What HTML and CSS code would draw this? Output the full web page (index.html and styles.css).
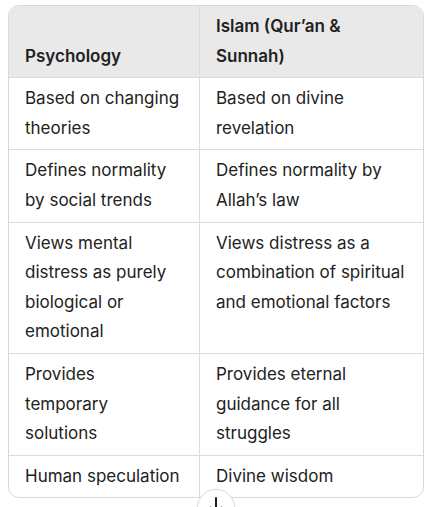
FILE: index.html
```html
<!DOCTYPE html>
<html lang="en">
<head>
<meta charset="utf-8">
<title>Psychology vs Islam</title>
<link rel="stylesheet" href="styles.css">
</head>
<body>
<div class="page">
  <div class="table-wrap">
    <table class="compare">
      <thead>
        <tr>
          <th class="col-a">Psychology</th>
          <th class="col-b">Islam (Qur’an &amp; Sunnah)</th>
        </tr>
      </thead>
      <tbody>
        <tr>
          <td>Based on changing theories</td>
          <td>Based on divine revelation</td>
        </tr>
        <tr>
          <td>Defines normality by social trends</td>
          <td>Defines normality by Allah’s law</td>
        </tr>
        <tr>
          <td>Views mental distress as purely biological or emotional</td>
          <td>Views distress as a combination of spiritual and emotional factors</td>
        </tr>
        <tr>
          <td>Provides temporary solutions</td>
          <td>Provides eternal guidance for all struggles</td>
        </tr>
        <tr>
          <td>Human speculation</td>
          <td>Divine wisdom</td>
        </tr>
      </tbody>
    </table>
  </div>
  <button class="scroll-down" aria-label="Scroll down">
    <svg width="16" height="20" viewBox="0 0 16 20" fill="none" stroke="#1d1d1f" stroke-width="2" stroke-linecap="round" stroke-linejoin="round">
      <path d="M8 2 V17"/>
      <path d="M2.5 11.5 L8 17 L13.5 11.5"/>
    </svg>
  </button>
</div>
</body>
</html>
```

FILE: styles.css
```css
html, body {
  margin: 0;
  padding: 0;
  background: #ffffff;
}

body {
  font-family: Inter, "Noto Sans", sans-serif;
  color: #222222;
  width: 433px;
  height: 507px;
  overflow: hidden;
}

.page {
  position: relative;
  height: 507px;
  padding: 5px 9px 0 8px;
  box-sizing: border-box;
}

.table-wrap {
  border: 1px solid #d8d8d8;
  border-radius: 11px;
  overflow: hidden;
}

.compare {
  width: 100%;
  border-collapse: separate;
  border-spacing: 0;
  table-layout: fixed;
  font-size: 17px;
  line-height: 29.6px;
}

.compare th,
.compare td {
  box-sizing: border-box;
  text-align: left;
  padding: 6px 16px 6px 16px;
  vertical-align: top;
  border-bottom: 1px solid #dcdcdc;
}

.compare .col-a {
  width: 191px;
}

.compare th:first-child,
.compare td:first-child {
  border-right: 1px solid #dcdcdc;
  padding-right: 18px;
}

.compare th {
  background: #e9e9e9;
  font-weight: 600;
  vertical-align: bottom;
}

.compare tbody tr:last-child td {
  border-bottom: none;
}

.scroll-down {
  position: absolute;
  left: 197px;
  top: 489px;
  width: 38px;
  height: 38px;
  border-radius: 50%;
  border: 1px solid #dcdcdc;
  background: #ffffff;
  box-shadow: 0 1px 3px rgba(0, 0, 0, 0.06);
  padding: 0;
  display: flex;
  align-items: flex-start;
  justify-content: center;
  padding-top: 6px;
  box-sizing: border-box;
}
```
